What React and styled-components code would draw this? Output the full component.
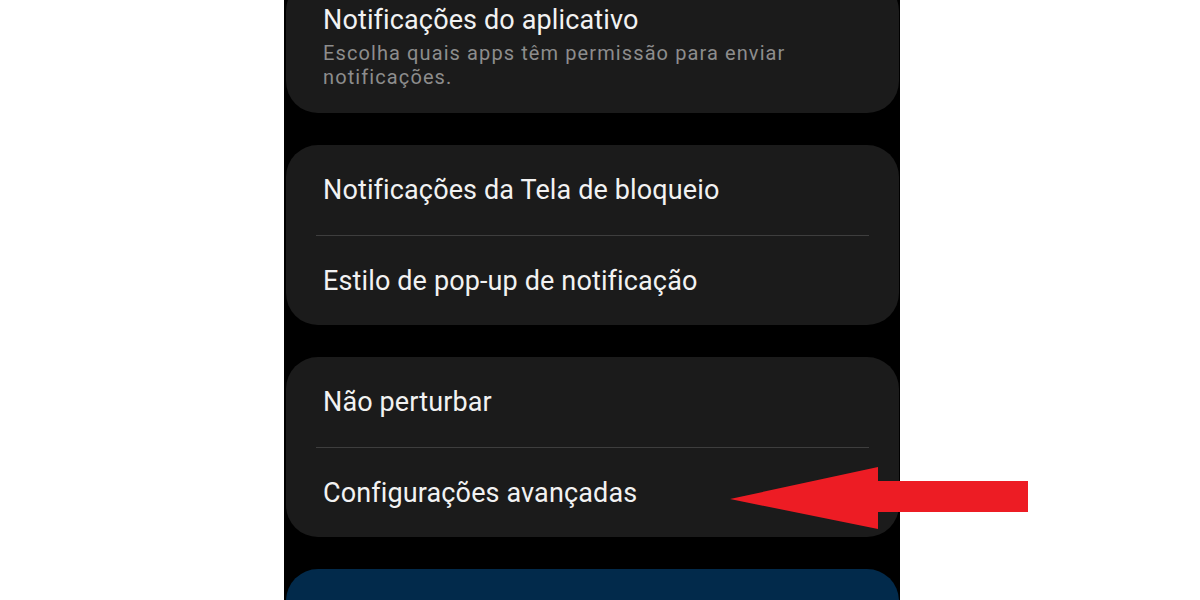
import React from 'react';
import styled, { createGlobalStyle } from 'styled-components';

const GlobalStyle = createGlobalStyle`
  html, body {
    margin: 0;
    padding: 0;
    background: #ffffff;
    font-family: Roboto, "Noto Sans", "Liberation Sans", sans-serif;
    overflow: hidden;
  }
`;

const sections = [
  [{ title: 'Notificações do aplicativo', subtitle: 'Escolha quais apps têm permissão para enviar notificações.' }],
  [{ title: 'Notificações da Tela de bloqueio' }, { title: 'Estilo de pop-up de notificação' }],
  [{ title: 'Não perturbar' }, { title: 'Configurações avançadas' }],
];

const Page = styled.div`
  position: relative;
  width: 1200px;
  height: 600px;
  overflow: hidden;
`;

const Screen = styled.div`
  margin-left: 284px;
  width: 616px;
  height: 600px;
  background: #000000;
  display: flex;
  flex-direction: column;
  gap: 32px;
  padding: 0 1px 0 2px;
  box-sizing: border-box;
  overflow: hidden;
`;

const Card = styled.div`
  flex-shrink: 0;
  background: ${(p) => (p.$accent ? '#022a4b' : '#1b1b1b')};
  border-radius: 32px;
  padding: 0 30px;
  margin-top: ${(p) => (p.$first ? '-21px' : '0')};
  min-height: ${(p) => (p.$accent ? '80px' : 'auto')};
`;

const Row = styled.div`
  display: flex;
  flex-direction: column;
  justify-content: center;
  min-height: 90px;
  padding: ${(p) => (p.$tall ? '24px 7px' : '0 7px')};
  border-top: ${(p) => (p.$divided ? '1.5px solid #3e3e3e' : 'none')};
  box-sizing: border-box;
`;

const Title = styled.div`
  color: #f2f2f2;
  font-size: 27px;
  line-height: 34px;
  letter-spacing: 0.13px;
`;

const Subtitle = styled.div`
  color: #8d8d8d;
  font-size: 20px;
  line-height: 24px;
  letter-spacing: 1.1px;
  margin-top: 4px;
`;

const Arrow = styled.svg`
  position: absolute;
  left: 730px;
  top: 466px;
  width: 298px;
  height: 64px;
`;

export default function App() {
  return (
    <Page>
      <GlobalStyle />
      <Screen>
        {sections.map((rows, i) => (
          <Card key={i} $first={i === 0}>
            {rows.map((row, j) => (
              <Row key={j} $divided={j > 0} $tall={!!row.subtitle}>
                <Title>{row.title}</Title>
                {row.subtitle && <Subtitle>{row.subtitle}</Subtitle>}
              </Row>
            ))}
          </Card>
        ))}
        <Card $accent />
      </Screen>
      <Arrow viewBox="0 0 298 64">
        <polygon points="0,33 148,1 148,15 298,15 298,46 148,46 148,63" fill="#ed1c24" />
      </Arrow>
    </Page>
  );
}
